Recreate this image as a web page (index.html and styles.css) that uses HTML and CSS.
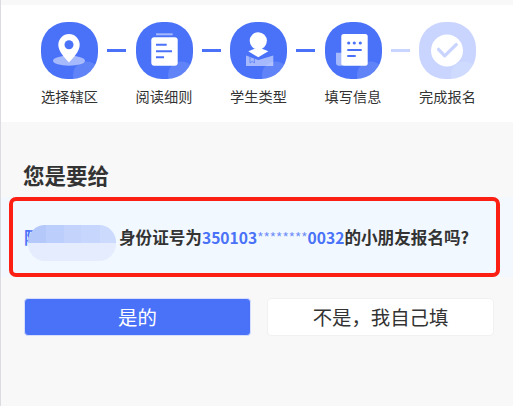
FILE: index.html
```html
<!DOCTYPE html>
<html lang="zh">
<head>
<meta charset="utf-8">
<title>报名</title>
<link rel="stylesheet" href="styles.css">
</head>
<body>
<div class="page">
  <header class="steps">
    <div class="step">
      <svg class="icon" viewBox="0 0 57 57"><rect class="base" width="57" height="57" rx="26"/><circle class="glow" cx="45.5" cy="53" r="13.5"/><ellipse class="soft" cx="28" cy="38.7" rx="16" ry="5"/><path class="wh" d="M28 40.5C24 36 17.3 29.5 17.3 22.7a10.7 10.7 0 0 1 21.4 0C38.7 29.5 32 36 28 40.5Z"/><circle class="hole" cx="28" cy="22.7" r="4.5"/></svg>
      <span class="label">选择辖区</span>
    </div>
    <i class="link"></i>
    <div class="step">
      <svg class="icon" viewBox="0 0 57 57"><rect class="base" width="57" height="57" rx="26"/><circle class="glow" cx="45.5" cy="53" r="13.5"/><rect class="soft" x="20" y="11.3" width="16.7" height="2"/><rect class="wh" x="15.3" y="15.3" width="26.4" height="28.4" rx="3"/><path class="ln" d="M20 22.7h10.7M20 29.3h16M20 35.3h8"/></svg>
      <span class="label">阅读细则</span>
    </div>
    <i class="link"></i>
    <div class="step">
      <svg class="icon" viewBox="0 0 57 57"><rect class="base" width="57" height="57" rx="26"/><circle class="glow" cx="45.5" cy="53" r="13.5"/><path class="soft" d="M16 33.5l12.3 4.5 15-4.5V44H16Z"/><path class="bm" d="M20 35v6l2.2-1.6 2.2 1.6v-4.6"/><circle class="wh" cx="28.3" cy="18.8" r="8.6"/><path class="wh" d="M18.3 29.3 28.3 25.3l10 4-10 6Z"/></svg>
      <span class="label">学生类型</span>
    </div>
    <i class="link"></i>
    <div class="step">
      <svg class="icon" viewBox="0 0 57 57"><rect class="base" width="57" height="57" rx="26"/><circle class="glow" cx="45.5" cy="53" r="13.5"/><path class="soft" d="M11 30.7h6v13h-3a3 3 0 0 1-3-3Z"/><rect class="wh" x="16.3" y="12" width="26.4" height="31.7" rx="2.5"/><circle class="hole" cx="23.7" cy="21" r="1.6"/><circle class="hole" cx="29.3" cy="21" r="1.6"/><circle class="hole" cx="35.3" cy="21" r="1.6"/><path class="ln" d="M22.3 28h14.4M22.3 34h8.4"/></svg>
      <span class="label">填写信息</span>
    </div>
    <i class="link link-off"></i>
    <div class="step">
      <svg class="icon" viewBox="0 0 57 57"><rect class="base-off" width="57" height="57" rx="26"/><circle class="glow" cx="45.5" cy="53" r="13.5"/><circle class="wh" cx="28" cy="28.5" r="16"/><path class="chk" d="M19.5 27.3l6.2 6.6 11.6-11.4"/></svg>
      <span class="label">完成报名</span>
    </div>
  </header>

  <main class="content">
    <h1 class="title">您是要给</h1>
    <div class="notice">
      <div class="frame">
        <p class="sentence"><span class="name">阿某某某某</span>身份证号为<span class="num">350103<span class="stars">********</span>0032</span>的小朋友报名吗?</p>
        <div class="mosaic">
          <i class="m1"></i><i class="m2"></i><i class="m3"></i><i class="m4"></i><i class="m5"></i>
        </div>
      </div>
    </div>
    <div class="actions">
      <button class="btn btn-yes">是的</button>
      <button class="btn btn-no">不是，我自己填</button>
    </div>
  </main>
</div>
</body>
</html>
```
FILE: styles.css
```css
* { box-sizing: border-box; }
html, body { margin: 0; height: 100%; }
body {
  background: #f8f8f8;
  font-family: "Noto Sans CJK SC", "Liberation Sans", sans-serif;
  color: #333;
  overflow: hidden;
}
.page {
  height: 406px;
  border-left: 1px solid #dcdce0;
  padding-top: 5px;
}
.steps {
  height: 117px;
  background: #fff;
  display: flex;
  align-items: flex-start;
  padding: 17px 0 0 40px;
}
.step {
  width: 57px;
  display: flex;
  flex-direction: column;
  align-items: center;
}
.icon { width: 57px; height: 57px; display: block; }
.base { fill: #4a72f8; }
.base-off { fill: #c9d5ff; }
.glow { fill: #fff; opacity: .12; }
.soft { fill: #fff; opacity: .5; }
.wh { fill: #fff; }
.hole { fill: #4a72f8; }
.ln { stroke: #4a72f8; stroke-width: 2; fill: none; }
.bm { stroke: #4a72f8; stroke-width: .9; fill: none; opacity: .7; }
.chk { stroke: #c9d5ff; stroke-width: 3.2; fill: none; stroke-linejoin: round; stroke-linecap: round; }
.label {
  margin-top: 7px;
  font-size: 14.2px;
  line-height: 20px;
  white-space: nowrap;
  color: #333;
}
.link {
  width: 19px;
  height: 3px;
  margin: 27px 9.25px 0;
  background: #4a72f8;
}
.link-off { background: #c9d5ff; }
.content { padding-top: 36px; }
.title {
  margin: 0 0 0 22px;
  font-size: 21.5px;
  line-height: 33px;
  font-weight: 700;
  color: #333;
}
.notice {
  margin-top: 6px;
  padding: 0 13px 0 8px;
  background: #f3f8ff;
}
.frame {
  position: relative;
  height: 80px;
  border: 4px solid #fb1f14;
  border-radius: 7px;
  background: #f1f8ff;
  display: flex;
  align-items: center;
  padding-left: 11px;
}
.sentence {
  margin: 0;
  font-size: 16.6px;
  line-height: 24px;
  font-weight: 700;
  white-space: nowrap;
  color: #333;
}
.name { display: inline-block; width: 95px; color: #4a72f8; }
.num { color: #4a72f8; font-size: 15.6px; }
.stars { font-weight: 400; font-size: 13.5px; vertical-align: 1px; color: #6d8df9; }
.mosaic {
  position: absolute;
  left: 15px;
  top: 24px;
  width: 88px;
  height: 36px;
  display: flex;
  border-radius: 17px;
  overflow: hidden;
  background: linear-gradient(#0000 50%, #e4ecfe 50%);
}
.mosaic i { height: 18px; display: block; }
.m1 { width: 18px; background: #b4c8fa; }
.m2 { width: 18px; background: #bccefb; }
.m3 { width: 17px; background: #c3d3fb; }
.m4 { width: 19px; background: #c6d6fc; }
.m5 { width: 16px; background: #cbdafd; }
.actions {
  display: flex;
  gap: 16px;
  margin: 21px 0 0 23px;
}
.btn {
  width: 227px;
  height: 38px;
  border-radius: 4px;
  font: 400 19.4px/24px "Noto Sans CJK SC", "Liberation Sans", sans-serif;
  padding: 0;
}
.btn-yes { background: #4a72f8; color: #fff; border: 1px solid #d5defc; }
.btn-no { background: #fff; color: #333; border: 1px solid #f1f1f3; }
```
